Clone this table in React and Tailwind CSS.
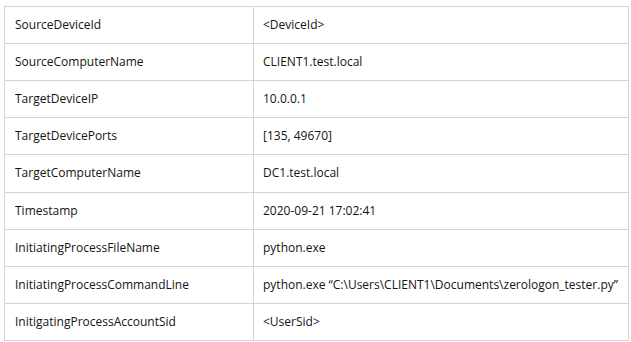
// Device event fields table
const rows = [
  ['SourceDeviceId', '<DeviceId>'],
  ['SourceComputerName', 'CLIENT1.test.local'],
  ['TargetDeviceIP', '10.0.0.1'],
  ['TargetDevicePorts', '[135, 49670]'],
  ['TargetComputerName', 'DC1.test.local'],
  ['Timestamp', '2020-09-21 17:02:41'],
  ['InitiatingProcessFileName', 'python.exe'],
  ['InitiatingProcessCommandLine', 'python.exe \u201CC:\\Users\\CLIENT1\\Documents\\zerologon_tester.py\u201D'],
  ['InitigatingProcessAccountSid', '<UserSid>'],
];

export default function App() {
  return (
    <div className="w-[631px] h-[342px] bg-white pt-[6px] pl-[4px]">
      <table
        className="w-[625px] h-[335px] border-collapse text-[12px] text-[#141414]"
        style={{ fontFamily: '"Open Sans", "Liberation Sans", sans-serif' }}
      >
        <tbody>
          {rows.map(([k, v]) => (
            <tr key={k}>
              <td className="w-[249px] border border-[#d4d4d4] pl-[10px] align-middle">{k}</td>
              <td className="border border-[#d4d4d4] pl-[9px] align-middle">{v}</td>
            </tr>
          ))}
        </tbody>
      </table>
    </div>
  );
}
